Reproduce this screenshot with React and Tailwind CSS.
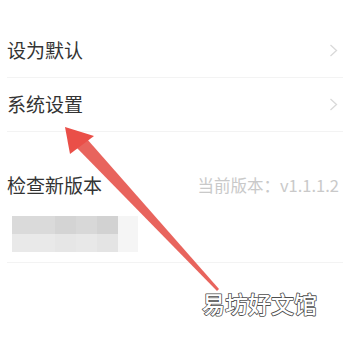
import React from 'react';

const cjk = { fontFamily: '"Noto Sans CJK SC", "Noto Sans", sans-serif' };

function Chevron() {
  return (
    <svg className="w-[9px] h-[13px] text-[#d9d9d9]" viewBox="0 0 9 13" fill="none" stroke="currentColor" strokeWidth={1.3}>
      <path d="M1.5 1 L7.5 6.5 L1.5 12" />
    </svg>
  );
}

export default function App() {
  return (
    <div className="relative w-[350px] h-[337px] bg-white overflow-hidden" style={cjk}>
      <div className="pt-[24px]">
        {/* Menu rows */}
        <div className="h-[54px] mx-[7px] pr-[5px] flex items-center justify-between border-b border-[#f3f3f3]">
          <span className="text-[19px] text-[#333]">设为默认</span>
          <Chevron />
        </div>
        <div className="h-[54px] mx-[7px] pr-[5px] flex items-center justify-between border-b border-[#f3f3f3]">
          <span className="text-[19px] text-[#333]">系统设置</span>
          <Chevron />
        </div>

        <div className="h-[27px]" />

        <div className="h-[52px] mx-[7px] pr-[4px] flex items-center justify-between">
          <span className="text-[19px] text-[#333]">检查新版本</span>
          <span className="text-[16.5px] text-[#c9c9c9]">当前版本：v1.1.1.2</span>
        </div>

        {/* blurred row */}
        <div className="h-[52px] mx-[7px] flex items-start pt-[5px] border-b border-[#f3f3f3]">
          <div className="flex h-[36px] ml-[5px]">
            <div className="w-[43px] flex flex-col">
              <div className="h-1/2 bg-[#dadada]" />
              <div className="h-1/2 bg-[#e9e9e9]" />
            </div>
            <div className="w-[21px] flex flex-col">
              <div className="h-1/2 bg-[#d4d4d4]" />
              <div className="h-1/2 bg-[#e6e6e6]" />
            </div>
            <div className="w-[21px] flex flex-col">
              <div className="h-1/2 bg-[#d8d8d8]" />
              <div className="h-1/2 bg-[#e8e8e8]" />
            </div>
            <div className="w-[21px] flex flex-col">
              <div className="h-1/2 bg-[#d2d2d2]" />
              <div className="h-1/2 bg-[#e4e4e4]" />
            </div>
            <div className="w-[20px] bg-[#f5f5f5]" />
          </div>
        </div>
      </div>

      {/* Red arrow annotation */}
      <svg className="absolute inset-0 pointer-events-none" width="350" height="337" viewBox="0 0 350 337">
        <polygon points="76,147 87,139 219,289 217,291" fill="#e5534b" opacity="0.9" />
        <polygon points="65,127 70,154 94,136" fill="#ea4f48" />
      </svg>

      {/* Watermark */}
      <svg className="absolute left-[198px] top-[286px]" width="130" height="36" viewBox="0 0 130 36">
        <text
          x="4" y="27"
          fontSize="23"
          fontWeight="500"
          fill="#fff"
          stroke="#4d4d4d"
          strokeWidth="1.6"
          strokeLinejoin="round"
          paintOrder="stroke"
          style={cjk}
        >
          易坊好文馆
        </text>
      </svg>
    </div>
  );
}
